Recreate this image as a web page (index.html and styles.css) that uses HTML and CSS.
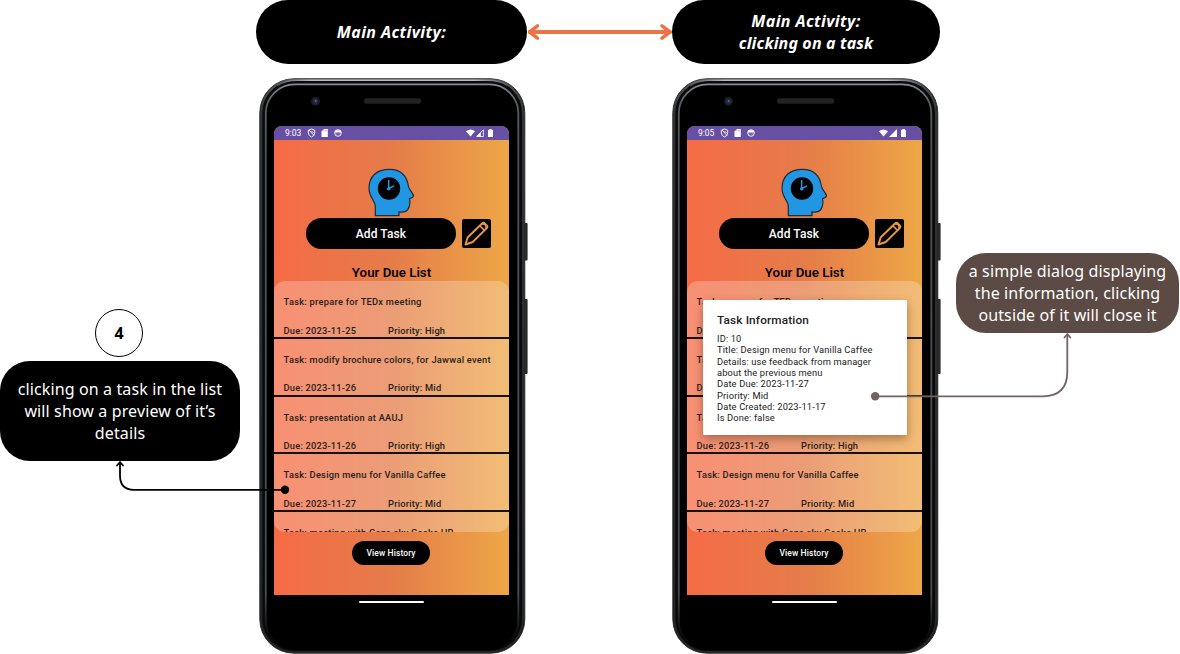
FILE: index.html
```html
<!DOCTYPE html>
<html lang="en">
<head>
<meta charset="utf-8">
<title>Main Activity</title>
<link rel="stylesheet" href="styles.css">
</head>
<body>
<svg class="defs" width="0" height="0">
  <defs>
    <linearGradient id="rim" x1="0" y1="0" x2="0" y2="1">
      <stop offset="0" stop-color="#8b8c92"/><stop offset=".03" stop-color="#5c5e64"/><stop offset=".12" stop-color="#4c535a"/><stop offset=".9" stop-color="#454c52"/><stop offset=".97" stop-color="#0c0c0d"/><stop offset="1" stop-color="#000"/>
    </linearGradient>
    <linearGradient id="edge" x1="0" y1="0" x2="0" y2="1">
      <stop offset="0" stop-color="#55565a"/><stop offset=".06" stop-color="#333435"/><stop offset="1" stop-color="#242425"/>
    </linearGradient>
    <linearGradient id="shine" x1="0" y1="0" x2="1" y2="0">
      <stop offset="0" stop-color="#55565a"/><stop offset=".15" stop-color="#b9b9c0"/><stop offset=".85" stop-color="#b9b9c0"/><stop offset="1" stop-color="#55565a"/>
    </linearGradient>
    <symbol id="frame" viewBox="0 0 270 577">
      <rect x="265" y="145" width="3.600" height="37.500" rx="1" fill="#29292a"/>
      <rect x="265" y="221" width="3.600" height="75" rx="1" fill="#29292a"/>
      <rect x=".8" y=".8" width="265" height="574.400" rx="34" fill="#0a0a0b" stroke="#333435"/>
      <rect x="2.300" y="1.800" width="261.700" height="572.300" rx="33" fill="none" stroke="url(#edge)" stroke-width="2"/>
      <path d="M18 7.500Q27 2.300 38 2.300H228Q240 2.300 249 7.500" fill="none" stroke="url(#shine)" stroke-width="1.600"/>
      <rect x="6.800" y="6.300" width="252.500" height="565" rx="29" fill="#000" stroke="url(#rim)" stroke-width="1.800"/>
      <circle cx="56.500" cy="23.300" r="4.500" fill="#1b1b1e"/>
      <circle cx="56.500" cy="23.300" r="2.800" fill="#202a4b"/>
      <circle cx="56.700" cy="23" r="1" fill="#566597"/>
      <rect x="105" y="20.300" width="57" height="5.400" rx="2" fill="#222"/>
    </symbol>
    <symbol id="left-icons" viewBox="0 0 36 10">
      <path d="M4.500 1L7.700 2.200V5Q7.300 8 4.500 9Q1.700 8 1.300 5V2.200Z" fill="none" stroke="#fff" stroke-width=".9"/>
      <path d="M2 2L7 7.500M4.500 3L6.500 5" stroke="#fff" stroke-width=".9"/>
      <path d="M17 1H20.800V9H14.500V3.500Z" fill="#fff"/>
      <path d="M16.800 2V3.500M18.300 2V3.500M19.700 2V3.500" stroke="#8a78bd" stroke-width=".5"/>
      <circle cx="31" cy="5" r="3.300" fill="none" stroke="#fff" stroke-width=".9"/>
      <path d="M28.300 2.200H33.700L34.500 4.500H27.500Z" fill="#fff"/>
      <path d="M29.500 6H30.300M31.700 6H32.500" stroke="#fff" stroke-width=".8"/>
    </symbol>
    <symbol id="wifi" viewBox="0 0 10 8"><path d="M0 2Q5 -1.800 10 2L5 8Z" fill="#fff"/></symbol>
    <symbol id="battery" viewBox="0 0 5 8"><path d="M0 1H1.300V0H3.700V1H5V8H0Z" fill="#fff"/></symbol>
    <symbol id="head" viewBox="0 0 46 49">
      <path d="M7.300 47.700V38C7.300 33 1 29 1 20.500C1 8 9 1.300 21.500 1.300C33 1.300 39 8.500 40.500 18.500C41 21.500 45.500 25.500 45.500 28C45.500 29.500 44 30 41.600 30.600C42.500 36 42 39 39.500 42C37 44.500 34 44.300 31 43.800V47.700Z" fill="#2196e3" stroke="#222b34" stroke-width="1.200"/>
      <circle cx="21" cy="20.500" r="11.200" fill="#000"/>
      <path d="M20.700 12V20.500L26 17.800" fill="none" stroke="#2196e3" stroke-width="1.500"/>
      <circle cx="20.700" cy="20.800" r="1.800" fill="#2196e3"/>
    </symbol>
    <symbol id="pencil" viewBox="0 0 29 29">
      <path d="M3.500 25.500L5.600 18.500L20.300 4.200Q21.500 3.200 22.700 4.300L25 6.700Q26 7.800 25 8.900L10.700 23Z" fill="none" stroke="#eb9846" stroke-width="1.900" stroke-linejoin="round"/>
      <path d="M17.800 6.800L22.500 11.400M20 5Q24.500 4.500 24 9.500" fill="none" stroke="#eb9846" stroke-width="1.500"/>
    </symbol>
  </defs>
</svg>
<main class="board">
  <h1 class="label title title-a"><span>Main Activity:</span></h1>
  <h1 class="label title title-b"><span>Main Activity:</span><span class="second">clicking on a task</span></h1>

  <section class="phone phone-a">
    <svg class="frame"><use href="#frame"/></svg>
    <div class="screen">
      <header class="status"><span>9:03</span><svg class="left-icons"><use href="#left-icons"/></svg><svg class="wifi"><use href="#wifi"/></svg><svg class="signal" viewBox="0 0 8 8"><path d="M.6 7.500H7.400V.8Z" fill="none" stroke="#fff" stroke-width=".8"/><path d="M.5 7.500L4.800 3.300V7.500Z" fill="#fff"/></svg><svg class="battery"><use href="#battery"/></svg></header>
      <svg class="head"><use href="#head"/></svg>
      <div class="actions"><button class="add">Add Task</button><button class="edit" aria-label="Edit"><svg><use href="#pencil"/></svg></button></div>
      <h2 class="heading">Your Due List</h2>
      <ul class="tasks">
        <li><p>Task: prepare for TEDx meeting</p><div><span>Due: 2023-11-25</span><span>Priority: High</span></div></li>
        <li><p>Task: modify brochure colors, for Jawwal event</p><div><span>Due: 2023-11-26</span><span>Priority: Mid</span></div></li>
        <li><p>Task: presentation at AAUJ</p><div><span>Due: 2023-11-26</span><span>Priority: High</span></div></li>
        <li><p>Task: Design menu for Vanilla Caffee</p><div><span>Due: 2023-11-27</span><span>Priority: Mid</span></div></li>
        <li><p>Task: meeting with Gaza sky Geeks HR</p></li>
      </ul>
      <button class="history">View History</button>
    </div>
    <div class="navbar"></div>
  </section>

  <section class="phone phone-b">
    <svg class="frame"><use href="#frame"/></svg>
    <div class="screen">
      <header class="status"><span>9:05</span><svg class="left-icons"><use href="#left-icons"/></svg><svg class="wifi"><use href="#wifi"/></svg><svg class="signal" viewBox="0 0 8 8"><path d="M0 8H8V0Z" fill="#fff"/></svg><svg class="battery"><use href="#battery"/></svg></header>
      <svg class="head"><use href="#head"/></svg>
      <div class="actions"><button class="add">Add Task</button><button class="edit" aria-label="Edit"><svg><use href="#pencil"/></svg></button></div>
      <h2 class="heading">Your Due List</h2>
      <ul class="tasks">
        <li><p>Task: prepare for TEDx meeting</p><div><span>Due: 2023-11-25</span><span>Priority: High</span></div></li>
        <li><p>Task: modify brochure colors, for Jawwal event</p><div><span>Due: 2023-11-26</span><span>Priority: Mid</span></div></li>
        <li><p>Task: presentation at AAUJ</p><div><span>Due: 2023-11-26</span><span>Priority: High</span></div></li>
        <li><p>Task: Design menu for Vanilla Caffee</p><div><span>Due: 2023-11-27</span><span>Priority: Mid</span></div></li>
        <li><p>Task: meeting with Gaza sky Geeks HR</p></li>
      </ul>
      <button class="history">View History</button>
    </div>
    <div class="navbar"></div>
    <div class="dialog">
      <h3>Task Information</h3>
      <p>ID: 10</p><p>Title: Design menu for Vanilla Caffee</p><p>Details: use feedback from manager</p><p>about the previous menu</p><p>Date Due: 2023-11-27</p><p>Priority: Mid</p><p>Date Created: 2023-11-17</p><p>Is Done: false</p>
    </div>
  </section>

  <div class="step">4</div>
  <div class="label note note-a"><span>clicking on a task in the list</span><span>will show a preview of it’s</span><span>details</span></div>
  <div class="label note note-b"><span>a simple dialog displaying</span><span>the information, clicking</span><span>outside of it will close it</span></div>

  <svg class="arrows" viewBox="0 0 1180 654" fill="none" stroke-linecap="round" stroke-linejoin="round">
    <path d="M530 32H670" stroke="#ec7346" stroke-width="4"/>
    <path d="M537.500 25.800L529.500 32L537.500 38.200M662 25.800L670 32L662 38.200" stroke="#ec7346" stroke-width="3.500"/>
    <path d="M285 489.800H134Q120 489.800 120 475.500V463" stroke="#000" stroke-width="1.800"/>
    <path d="M117 465.500L120 462L123 465.500" stroke="#000" stroke-width="1.800"/>
    <circle cx="285" cy="489.800" r="4.200" fill="#000"/>
    <path d="M875 396.300H1043Q1067.300 396 1067.300 372V335" stroke="#74645f" stroke-width="1.800"/>
    <path d="M1064.500 337.500L1067.300 334L1070.300 337.500" stroke="#74645f" stroke-width="1.800"/>
    <circle cx="875.200" cy="396.300" r="4.200" fill="#74645f"/>
  </svg>
</main>
</body>
</html>
```
FILE: styles.css
```css
* { box-sizing: border-box; margin: 0; padding: 0; }
body { background: #fff; overflow: hidden; font-family: Roboto, "Liberation Sans", sans-serif; }
button { border: 0; font-family: inherit; color: #fff; background: #000; }
.defs { position: absolute; }
.board { position: relative; width: 1180px; height: 654px; overflow: hidden; }

.label { position: absolute; display: flex; flex-direction: column; align-items: center; justify-content: center; background: #000; color: #fff; font-family: "Noto Sans", sans-serif; font-size: 16px; line-height: 22px; white-space: nowrap; }
.title { top: 0; height: 64px; border-radius: 32px; font-weight: 700; font-style: italic; letter-spacing: .4px; }
.title .second { letter-spacing: .15px; }
.title-a { left: 256px; width: 271px; }
.title-b { left: 672px; width: 268px; }
.note { font-weight: 400; letter-spacing: .12px; }
.note-a { left: 0; top: 361px; width: 240px; height: 100px; border-radius: 30px; }
.note-b { left: 956px; top: 253px; width: 223px; height: 80px; border-radius: 30px; background: #5c4a44; }
.step { position: absolute; left: 95px; top: 309px; width: 48px; height: 48px; border: 1px solid #000; border-radius: 50%; display: flex; align-items: center; justify-content: center; font: 700 16px "Noto Sans", sans-serif; }
.arrows { position: absolute; left: 0; top: 0; width: 1180px; height: 654px; }

.phone { position: absolute; top: 78px; width: 270px; height: 577px; padding: 48px 20px 0 15px; }
.phone-a { left: 259px; }
.phone-b { left: 672px; }
.frame { position: absolute; left: 0; top: 0; width: 270px; height: 577px; }
.screen { position: relative; width: 235px; height: 469px; display: flex; flex-direction: column; align-items: center; border-radius: 8px 8px 0 0; overflow: hidden; background: linear-gradient(90deg, #f66b46, #e57c49 50%, #eda747); }
.status { align-self: stretch; height: 14px; display: flex; align-items: center; padding: 0 16px 0 11px; background: #6750a4; color: #fff; font-size: 8.5px; }
.left-icons { width: 36px; height: 10px; margin-left: 6px; }
.wifi { width: 9px; height: 8px; margin-left: auto; }
.signal { width: 8px; height: 8px; margin: 0 4px 0 1px; }
.battery { width: 5px; height: 8px; }
.head { width: 46px; height: 49px; margin: 28px 1px 0 0; }
.actions { align-self: stretch; display: flex; gap: 6px; align-items: center; padding-left: 32px; margin-top: 1px; }
.add { width: 150px; height: 31px; border-radius: 16px; font-size: 12px; font-weight: 500; letter-spacing: .1px; }
.edit { width: 29px; height: 29px; border-radius: 2px; }
.edit svg { display: block; width: 29px; height: 29px; }
.heading { margin-top: 15px; height: 17px; line-height: 17px; font-size: 13.3px; font-weight: 600; color: #080504; }
.tasks { align-self: stretch; height: 251px; list-style: none; overflow: hidden; border-radius: 11px; background: rgba(255,255,255,.25); color: #291e19; font-size: 9.3px; font-weight: 500; line-height: 12px; letter-spacing: .25px; white-space: nowrap; }
.tasks li { height: 57.75px; padding: 15px 9.6px 0; border-bottom: 2px solid #17100b; }
.tasks li:last-child { border: 0; }
.tasks div { display: grid; grid-template-columns: 104.500px auto; margin-top: 16.7px; letter-spacing: .2px; }
.history { width: 78px; height: 24px; margin: 9px 1px 0 0; border-radius: 12px; font-size: 8.5px; font-weight: 500; letter-spacing: .1px; }
.navbar { width: 65px; height: 2px; margin: 6px auto 0; background: #fff; border-radius: 1px; position: relative; }
.dialog { position: absolute; left: 31px; top: 222px; width: 204px; height: 135px; padding: 12px 14px; background: #fff; border-radius: 1px; box-shadow: 0 4px 10px rgba(60,25,0,.38); color: #222; font-size: 9.3px; line-height: 11.35px; letter-spacing: .14px; white-space: nowrap; }
.dialog h3 { margin-bottom: 5px; font-size: 11.8px; line-height: 16px; font-weight: 500; }
```
